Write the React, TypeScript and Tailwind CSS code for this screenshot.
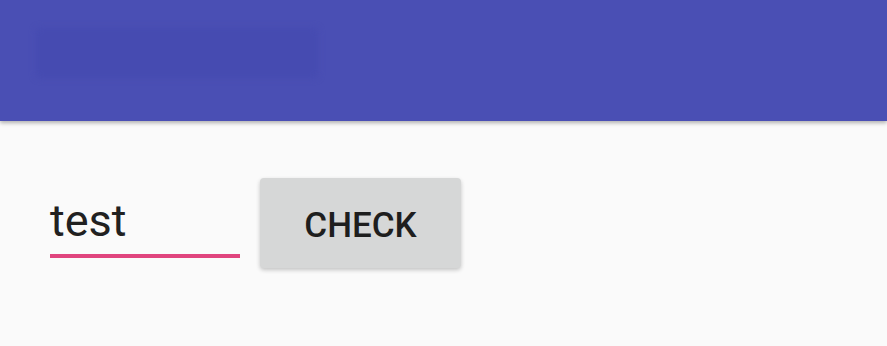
export default function App() {
  return (
    <div className="w-[887px] h-[346px] bg-[#fafafa] overflow-hidden font-['Roboto',sans-serif]">
      <header className="h-[121px] bg-[#4a4fb4] shadow-[0_2px_4px_rgba(0,0,0,0.3)] relative z-10 pl-[36px] pt-[28px]">
        <div className="w-[282px] h-[50px] bg-[#464bb1] blur-[3px] rounded-sm" />
      </header>
      <main className="flex items-start pl-[50px] pt-[57px] gap-[20px]">
        <div className="w-[190px] pt-[23px]">
          <div className="text-[45px] leading-[40px] text-[#212121] h-[40px]">test</div>
          <div className="mt-[13px] h-[4px] bg-[#e0457e]" />
        </div>
        <button className="w-[201px] h-[90px] pt-[6px] bg-[#d6d7d7] rounded-[4px] shadow-[0_2px_4px_rgba(0,0,0,0.22)] text-[35px] font-medium text-[#1e1e1e] flex items-center justify-center">
          CHECK
        </button>
      </main>
    </div>
  );
}
